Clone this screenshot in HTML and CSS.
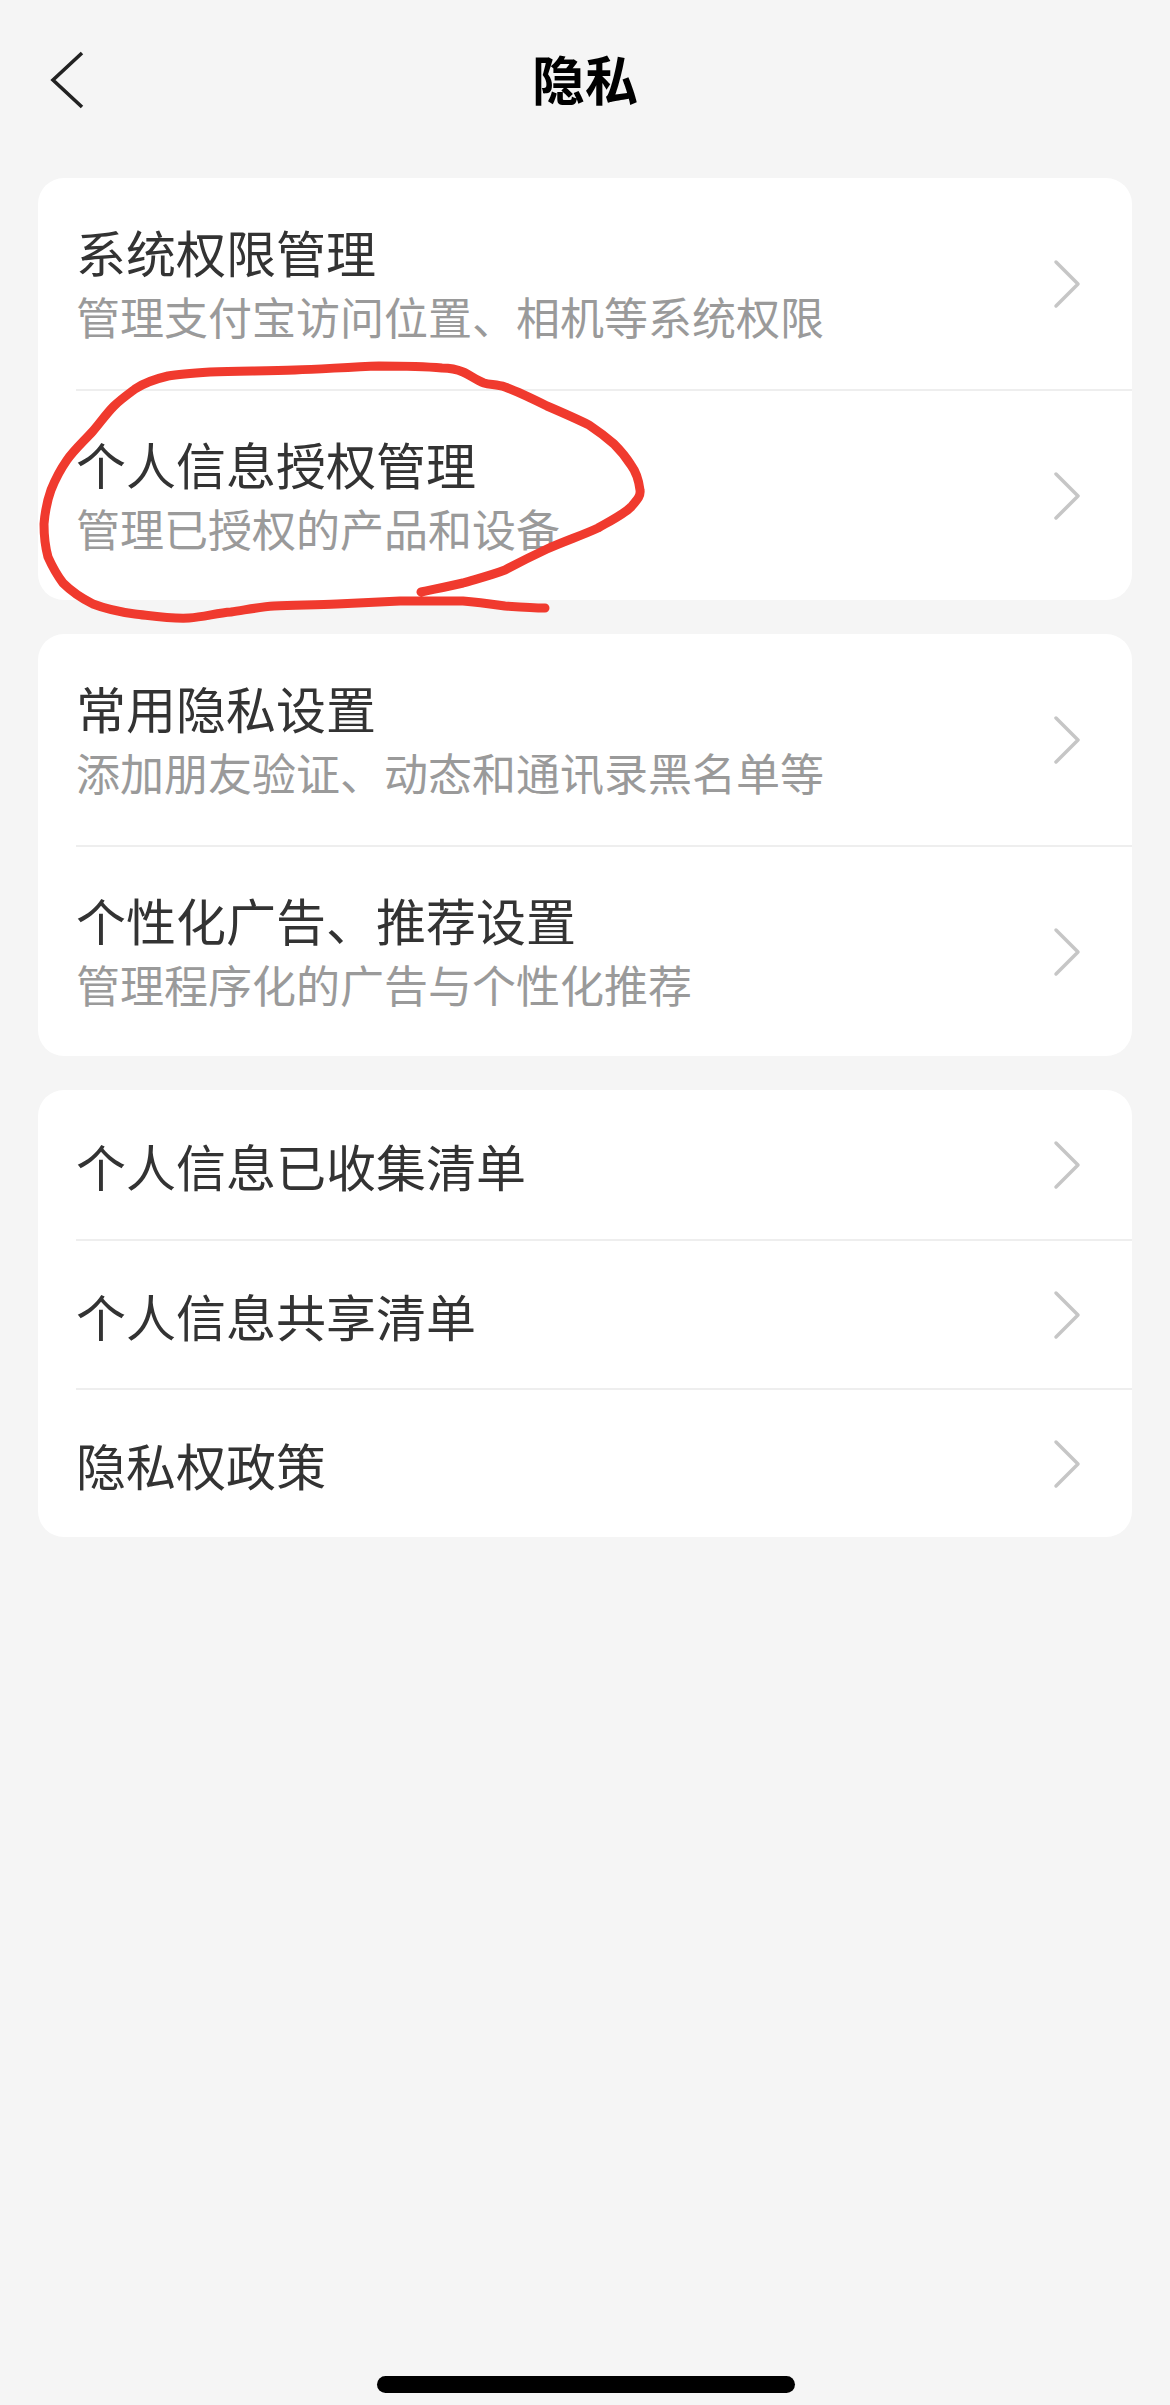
FILE: index.html
```html
<!DOCTYPE html>
<html lang="zh-CN">
<head>
<meta charset="utf-8">
<title>隐私</title>
<link rel="stylesheet" href="styles.css">
</head>
<body>
<div class="page">
  <header class="nav">
    <div class="nav-left">
      <svg class="back" width="40" height="60" viewBox="0 0 40 60" aria-hidden="true">
        <path d="M34 3 L5 30 L34 57" fill="none" stroke="#222" stroke-width="3.6" stroke-linejoin="miter"/>
      </svg>
    </div>
    <h1 class="nav-title">隐私</h1>
    <div class="nav-right"></div>
  </header>

  <main class="list">
    <section class="card">
      <div class="row row--two">
        <div class="row-text">
          <div class="row-title">系统权限管理</div>
          <div class="row-sub">管理支付宝访问位置、相机等系统权限</div>
        </div>
        <svg class="chev" width="30" height="50" viewBox="0 0 30 50"><path d="M4 3 L26 25 L4 47"/></svg>
      </div>
      <div class="row row--two">
        <div class="row-text">
          <div class="row-title">个人信息授权管理</div>
          <div class="row-sub">管理已授权的产品和设备</div>
        </div>
        <svg class="chev" width="30" height="50" viewBox="0 0 30 50"><path d="M4 3 L26 25 L4 47"/></svg>
      </div>
    </section>

    <section class="card">
      <div class="row row--two">
        <div class="row-text">
          <div class="row-title">常用隐私设置</div>
          <div class="row-sub">添加朋友验证、动态和通讯录黑名单等</div>
        </div>
        <svg class="chev" width="30" height="50" viewBox="0 0 30 50"><path d="M4 3 L26 25 L4 47"/></svg>
      </div>
      <div class="row row--two">
        <div class="row-text">
          <div class="row-title">个性化广告、推荐设置</div>
          <div class="row-sub">管理程序化的广告与个性化推荐</div>
        </div>
        <svg class="chev" width="30" height="50" viewBox="0 0 30 50"><path d="M4 3 L26 25 L4 47"/></svg>
      </div>
    </section>

    <section class="card">
      <div class="row row--one">
        <div class="row-text"><div class="row-title">个人信息已收集清单</div></div>
        <svg class="chev" width="30" height="50" viewBox="0 0 30 50"><path d="M4 3 L26 25 L4 47"/></svg>
      </div>
      <div class="row row--one">
        <div class="row-text"><div class="row-title">个人信息共享清单</div></div>
        <svg class="chev" width="30" height="50" viewBox="0 0 30 50"><path d="M4 3 L26 25 L4 47"/></svg>
      </div>
      <div class="row row--one">
        <div class="row-text"><div class="row-title">隐私权政策</div></div>
        <svg class="chev" width="30" height="50" viewBox="0 0 30 50"><path d="M4 3 L26 25 L4 47"/></svg>
      </div>
    </section>
  </main>

  <div class="home-bar"></div>

  <svg class="annotation" width="1170" height="2405" viewBox="0 0 1170 2405" aria-hidden="true">
    <path d="M421 592 C440 588 450 586 463 583 C480 578 492 575 505 570 C520 562 532 556 547 549 C565 541 583 535 598 528 C612 520 624 514 631 507 C637 500 641 496 640 490 C639 482 637 473 631 465 C626 457 621 451 614 444 C606 437 598 431 589 425 C575 418 561 412 547 406 C533 399 519 392 505 387 C497 384 490 385 484 383 C476 380 470 375 463 372 C456 369 450 368 442 368 C420 366 400 366 379 366 C350 367 322 369 295 370 C266 371 238 371 210 372 C195 373 180 374 168 376 C155 379 144 383 135 389 C127 395 120 400 114 406 C106 414 100 423 93 431 C84 441 74 450 67 460 C60 470 55 480 51 490 C47 501 45 512 44 524 C44 535 45 546 48 557 C52 566 57 575 63 583 C71 591 81 598 93 604 C106 609 120 612 135 614 C153 616 171 619 189 618 C204 617 217 613 231 612 C245 610 260 607 274 606 C295 605 316 605 337 604 C358 603 379 602 400 601 C421 601 442 601 463 601 C477 602 491 604 505 606 C519 607 532 608 545 608"
      fill="none" stroke="#f03a2e" stroke-width="9" stroke-linecap="round" stroke-linejoin="round"/>
  </svg>
</div>
</body>
</html>
```

FILE: styles.css
```css
* {
  box-sizing: border-box;
}

html, body {
  margin: 0;
  padding: 0;
}

body {
  background: #f5f5f5;
  font-family: "Noto Sans CJK SC", "Noto Sans", sans-serif;
  color: #333333;
}

.page {
  position: relative;
  width: 1170px;
  height: 2405px;
  display: flex;
  flex-direction: column;
  overflow: hidden;
}

.nav {
  height: 156px;
  display: grid;
  grid-template-columns: 1fr auto 1fr;
  align-items: center;
  padding-left: 48px;
}

.nav-left {
  display: flex;
  align-items: center;
  padding-top: 4px;
}

.back {
  display: block;
}

.nav-title {
  margin: 0;
  font-size: 53px;
  font-weight: 700;
  color: #000000;
  line-height: 1;
  letter-spacing: 0;
  transform: translateX(-24px);
}

.list {
  padding: 22px 38px 0;
  display: flex;
  flex-direction: column;
  gap: 34px;
}

.card {
  background: #ffffff;
  border-radius: 26px;
  overflow: hidden;
}

.row {
  display: flex;
  align-items: center;
  justify-content: space-between;
  margin-left: 38px;
  padding-left: 0;
  padding-right: 50px;
}

.row + .row {
  border-top: 2px solid #eeeeee;
}

.row--two {
  height: 211px;
}

.row--one {
  height: 149px;
}

.row-text {
  display: flex;
  flex-direction: column;
}

.row-title {
  font-size: 50px;
  line-height: 64px;
  color: #333333;
  white-space: nowrap;
}

.row-sub {
  font-size: 44px;
  line-height: 66px;
  color: #9a9a9a;
  white-space: nowrap;
}

.chev {
  flex: none;
  display: block;
}

.chev path {
  fill: none;
  stroke: #c6c6c6;
  stroke-width: 3.5;
  stroke-linecap: round;
  stroke-linejoin: round;
}

.home-bar {
  margin-top: auto;
  margin-bottom: 12px;
  align-self: center;
  width: 418px;
  height: 17px;
  border-radius: 9px;
  background: #000000;
  transform: translateX(1px);
}

.annotation {
  position: absolute;
  top: 0;
  left: 0;
  pointer-events: none;
}
```
